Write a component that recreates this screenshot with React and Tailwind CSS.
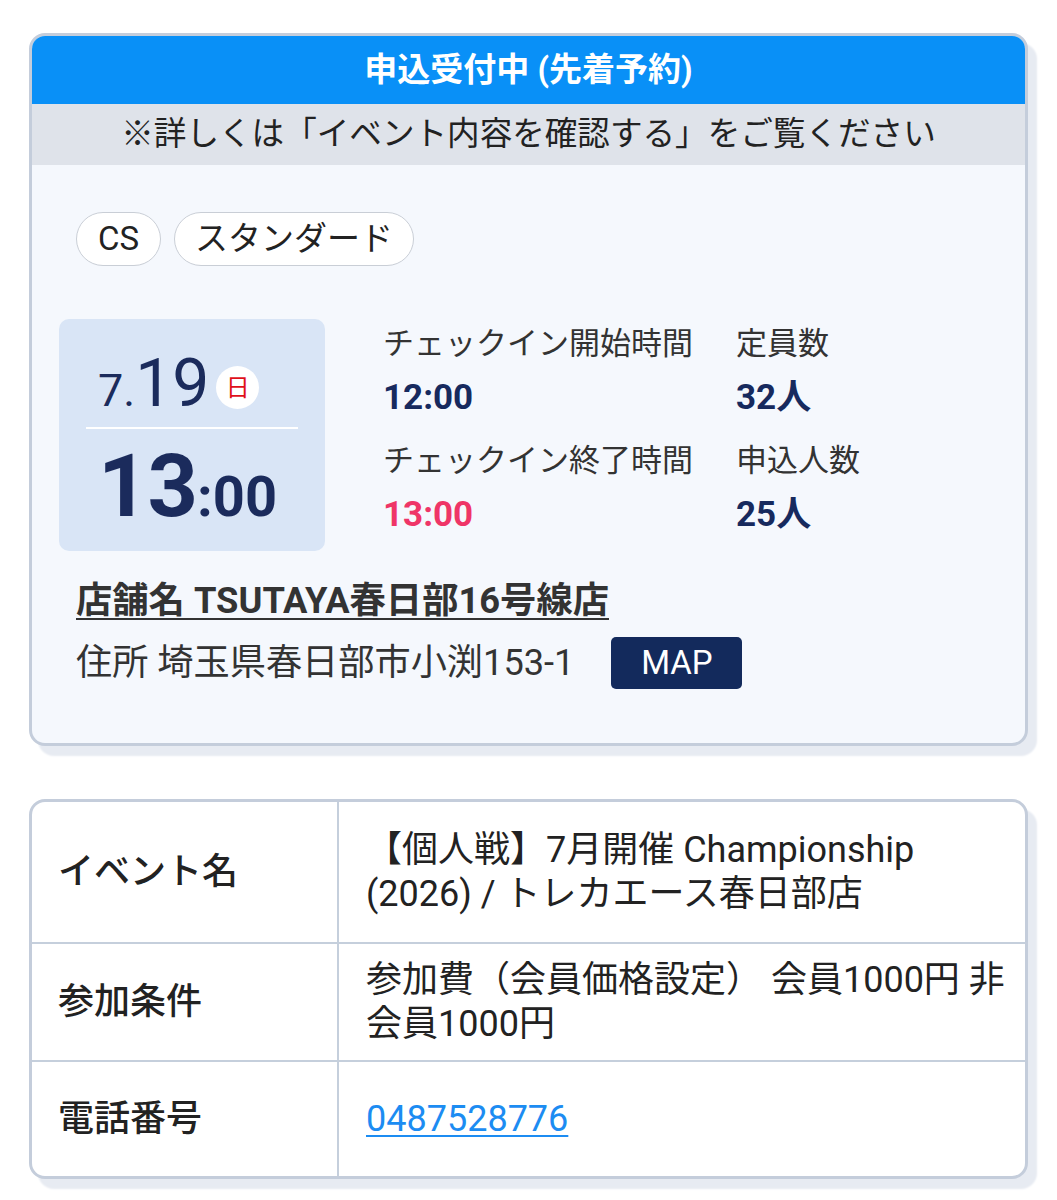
import React from "react";

const font = { fontFamily: 'Roboto, "Noto Sans CJK JP", sans-serif' };

function Tag({ children, className = "" }) {
  return (
    <span
      className={`inline-flex items-center rounded-full border border-[#c9ced6] bg-white text-[33px] leading-[40px] text-[#222] py-[6px] ${className}`}
    >
      {children}
    </span>
  );
}

function Stat({ label, value, valueColor = "text-[#172a5e]", first }) {
  return (
    <div className={first ? "" : "mt-[18px]"}>
      <div className="text-[31px] leading-[43px] text-[#333] whitespace-nowrap">{label}</div>
      <div className={`mt-[10px] text-[35px] leading-[46px] font-bold ${valueColor}`}>{value}</div>
    </div>
  );
}

function Row({ label, children, pad, last }) {
  return (
    <div className={`grid grid-cols-[307px_1fr] ${last ? "" : "border-b-2 border-[#c5cfdc]"}`}>
      <div className="flex items-center border-r-2 border-[#c5cfdc] pl-[26px] text-[36px] font-medium text-[#222]">
        {label}
      </div>
      <div className={`pl-[27px] pr-[8px] text-[36px] leading-[44px] text-[#222] ${pad}`}>{children}</div>
    </div>
  );
}

export default function App() {
  return (
    <div className="min-h-[1200px] bg-white px-[29px] pt-[33px] pb-[20px]" style={font}>
      {/* event card */}
      <div className="overflow-hidden rounded-[16px] border-[3px] border-[#c4cddb] bg-[#f5f8fd] shadow-[9px_10px_2px_#e7ebf2]">
        <div className="flex h-[68px] items-center justify-center bg-[#0990f7] text-[33px] font-bold text-white">
          申込受付中 (先着予約)
        </div>
        <div className="flex h-[61px] items-center justify-center bg-[#dfe3ea] text-[32.6px] text-[#222]">
          ※詳しくは「イベント内容を確認する」をご覧ください
        </div>

        <div className="px-[44px] pt-[47px] pb-[54px]">
          <div className="flex gap-[13px]">
            <Tag className="px-[21px]">CS</Tag>
            <Tag className="px-[20px]">スタンダード</Tag>
          </div>

          <div className="mt-[53px] -ml-[17px] flex items-start gap-[58px]">
            <div className="h-[232px] w-[266px] shrink-0 rounded-[10px] bg-[#d9e5f6] px-[27px] pt-[32px] text-[#1b2b5c]">
              <div className="flex items-start pl-[12px]">
                <span className="text-[66px] leading-none">
                  <span className="text-[45px]">7.</span>19
                </span>
                <span className="ml-[7px] mt-[15px] flex h-[43px] w-[43px] items-center justify-center rounded-full bg-white text-[24px] leading-none text-[#e0101a]">
                  日
                </span>
              </div>
              <div className="mt-[10px] h-[2px] bg-white" />
              <div className="mt-[13px] pl-[12px] font-bold leading-none">
                <span className="text-[88px] tracking-[-1px]">13</span>
                <span className="text-[56px]">:00</span>
              </div>
            </div>

            <div className="flex pt-[3px]">
              <div className="w-[353px]">
                <Stat first label="チェックイン開始時間" value="12:00" />
                <Stat label="チェックイン終了時間" value="13:00" valueColor="text-[#ef3567]" />
              </div>
              <div>
                <Stat first label="定員数" value="32人" />
                <Stat label="申込人数" value="25人" />
              </div>
            </div>
          </div>

          <div className="mt-[27px] text-[36.3px] font-bold leading-[46px] text-[#333] underline decoration-2 underline-offset-[5px]">
            店舗名 TSUTAYA春日部16号線店
          </div>
          <div className="mt-[13px] flex items-center">
            <span className="text-[36.2px] leading-[46px] text-[#333]">住所 埼玉県春日部市小渕153-1</span>
            <span className="ml-[37px] flex h-[52px] w-[131px] items-center justify-center rounded-[5px] bg-[#132a5c] text-[33px] text-white">
              MAP
            </span>
          </div>
        </div>
      </div>

      {/* detail table */}
      <div className="mt-[53px] overflow-hidden rounded-[16px] border-[3px] border-[#c4cddb] bg-white shadow-[9px_10px_2px_#e7ebf2]">
        <Row label="イベント名" pad="py-[26px]">
          【個人戦】7月開催 Championship (2026) / トレカエース春日部店
        </Row>
        <Row label="参加条件" pad="py-[14px]">
          参加費（会員価格設定） 会員1000円 非会員1000円
        </Row>
        <Row label="電話番号" pad="py-[35px]" last>
          <a href="#" className="text-[#1c8cf2] underline decoration-2 underline-offset-[4px]">
            0487528776
          </a>
        </Row>
      </div>
    </div>
  );
}
